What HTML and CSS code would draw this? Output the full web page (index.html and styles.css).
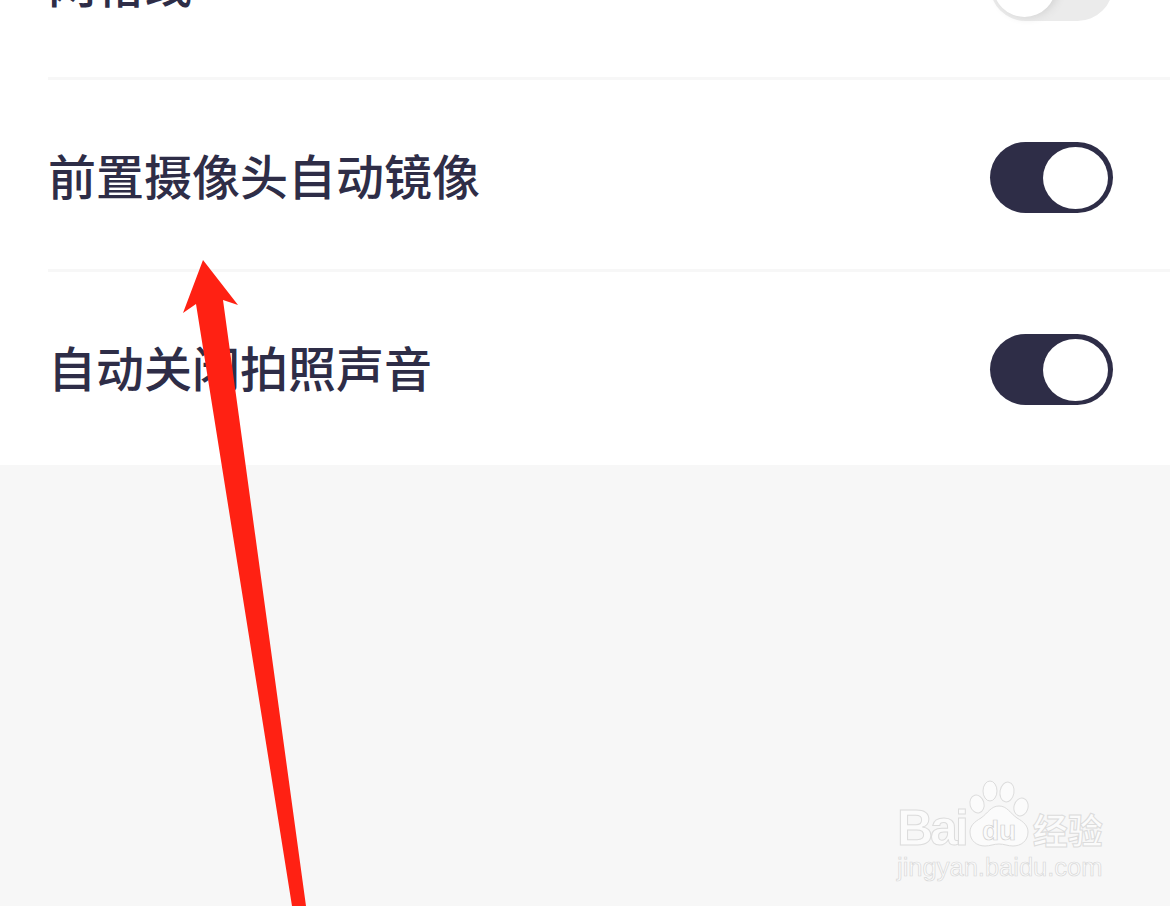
FILE: index.html
```html
<!DOCTYPE html>
<html lang="zh-CN">
<head>
<meta charset="utf-8">
<title>设置</title>
<link rel="stylesheet" href="styles.css">
</head>
<body>
<main class="page">
  <ul class="list">
    <li class="row"><span class="label">网格线</span><span class="switch switch-off"><span class="knob"></span></span></li>
    <li class="row"><span class="label">前置摄像头自动镜像</span><span class="switch switch-on"><span class="knob"></span></span></li>
    <li class="row row-last"><span class="label">自动关闭拍照声音</span><span class="switch switch-on"><span class="knob"></span></span></li>
  </ul>
</main>
<svg class="arrow" width="1170" height="906" viewBox="0 0 1170 906" aria-hidden="true">
  <polygon points="203,260 238,305 223,300 306,906 292,906 196,304 183,313" fill="#ff2113"/>
</svg>
<div class="mark">
  <div class="mark-top">
    <span class="mark-bai">Bai</span>
    <svg class="mark-paw" width="62" height="68" viewBox="0 0 62 68" aria-hidden="true">
      <g fill="#fbfbfb" stroke="#dcdcdc" stroke-width="1">
        <ellipse cx="9" cy="24" rx="7" ry="9" transform="rotate(-15 9 24)"/>
        <ellipse cx="22" cy="11" rx="7" ry="10"/>
        <ellipse cx="39" cy="12" rx="7" ry="10" transform="rotate(10 39 12)"/>
        <ellipse cx="53" cy="27" rx="7" ry="9" transform="rotate(15 53 27)"/>
        <path d="M31 26c8 0 11 7 18 12 7 4 11 8 11 14 0 9-7 14-15 14-5 0-9-2-14-2s-9 2-14 2C9 66 2 61 2 52c0-6 4-10 11-14 7-5 10-12 18-12z"/>
      </g>
      <text class="mark-du" x="31" y="60" text-anchor="middle">du</text>
    </svg>
    <span class="mark-cn">经验</span>
  </div>
  <div class="mark-url">jingyan.baidu.com</div>
</div>
</body>
</html>
```
FILE: styles.css
```css
html, body {
  margin: 0;
  padding: 0;
  width: 1170px;
  height: 906px;
  overflow: hidden;
  background: #f7f7f7;
}
body {
  position: relative;
  font-family: "Noto Sans CJK SC", "Noto Sans", sans-serif;
}
.page {
  height: 906px;
  overflow: hidden;
}
.list {
  list-style: none;
  margin: -112px 0 0;
  padding: 0 0 0 48px;
  background: #fff;
}
.row {
  box-sizing: border-box;
  height: 192px;
  padding: 6px 57px 0 0;
  display: flex;
  align-items: center;
  justify-content: space-between;
  border-bottom: 3px solid #f7f7f7;
}
.row-last {
  height: 193px;
  padding-top: 2px;
  border-bottom: 0;
}
.label {
  font-size: 48px;
  line-height: 1;
  font-weight: 500;
  color: #2e2d47;
  margin-bottom: 8px;
}
.switch {
  box-sizing: border-box;
  width: 123px;
  height: 71px;
  border-radius: 36px;
  display: flex;
  align-items: center;
  padding: 4px 5px;
}
.switch-on {
  background: #2e2d47;
  justify-content: flex-end;
}
.switch-off {
  background: #ebebeb;
  justify-content: flex-start;
  padding: 0 0 0 3px;
}
.knob {
  display: block;
  width: 65px;
  height: 62px;
  border-radius: 50%;
  background: #fff;
}
.switch-off .knob {
  width: 63px;
  height: 63px;
  box-shadow: 3px 0 8px #d2d2d2;
}
.arrow {
  position: absolute;
  left: 0;
  top: 0;
}
.mark {
  position: absolute;
  left: 897px;
  top: 780px;
  width: 214px;
  font-family: "Liberation Sans", sans-serif;
  color: #fbfbfb;
}
.mark-top {
  display: flex;
  align-items: flex-end;
  height: 72px;
}
.mark-bai {
  font-size: 50px;
  line-height: 48px;
  font-weight: 700;
  letter-spacing: -3px;
  -webkit-text-stroke: 1px #dcdcdc;
}
.mark-paw {
  margin-left: 2px;
  margin-bottom: 4px;
  flex: none;
}
.mark-du {
  font-size: 28px;
  font-weight: 700;
  fill: #fbfbfb;
  stroke: #cfcfcf;
  stroke-width: 0.7px;
}
.mark-cn {
  font-family: "Noto Sans CJK SC", sans-serif;
  font-size: 35px;
  line-height: 46px;
  font-weight: 700;
  margin-left: 3px;
  -webkit-text-stroke: 1px #dcdcdc;
  white-space: nowrap;
}
.mark-url {
  font-size: 25.5px;
  line-height: 28px;
  margin-top: 1px;
  color: #fbfbfb;
  -webkit-text-stroke: 0.7px #d8d8d8;
  white-space: nowrap;
}
```
